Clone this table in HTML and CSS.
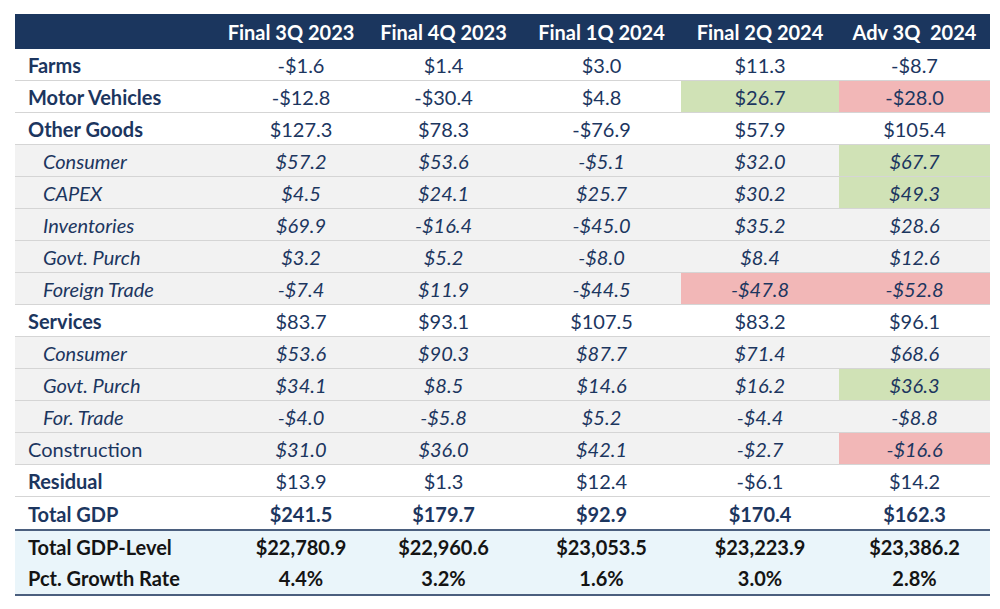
FILE: index.html
```html
<!DOCTYPE html>
<html lang="en">
<head>
<meta charset="utf-8">
<title>GDP Contributions</title>
<link rel="stylesheet" href="styles.css">
</head>
<body>
<div class="table">
  <div class="row head">
    <div class="cell label"></div>
    <div class="cell first">Final 3Q 2023</div>
    <div class="cell">Final 4Q 2023</div>
    <div class="cell">Final 1Q 2024</div>
    <div class="cell">Final 2Q 2024</div>
    <div class="cell">Adv 3Q&nbsp; 2024</div>
  </div>
  <div class="row main">
    <div class="cell label">Farms</div>
    <div class="cell">-$1.6</div><div class="cell">$1.4</div><div class="cell">$3.0</div><div class="cell">$11.3</div><div class="cell">-$8.7</div>
  </div>
  <div class="row main">
    <div class="cell label">Motor Vehicles</div>
    <div class="cell">-$12.8</div><div class="cell">-$30.4</div><div class="cell">$4.8</div><div class="cell good">$26.7</div><div class="cell bad">-$28.0</div>
  </div>
  <div class="row main">
    <div class="cell label">Other Goods</div>
    <div class="cell">$127.3</div><div class="cell">$78.3</div><div class="cell">-$76.9</div><div class="cell">$57.9</div><div class="cell">$105.4</div>
  </div>
  <div class="row sub">
    <div class="cell label">Consumer</div>
    <div class="cell">$57.2</div><div class="cell">$53.6</div><div class="cell">-$5.1</div><div class="cell">$32.0</div><div class="cell good">$67.7</div>
  </div>
  <div class="row sub">
    <div class="cell label">CAPEX</div>
    <div class="cell">$4.5</div><div class="cell">$24.1</div><div class="cell">$25.7</div><div class="cell">$30.2</div><div class="cell good">$49.3</div>
  </div>
  <div class="row sub">
    <div class="cell label">Inventories</div>
    <div class="cell">$69.9</div><div class="cell">-$16.4</div><div class="cell">-$45.0</div><div class="cell">$35.2</div><div class="cell">$28.6</div>
  </div>
  <div class="row sub">
    <div class="cell label">Govt. Purch</div>
    <div class="cell">$3.2</div><div class="cell">$5.2</div><div class="cell">-$8.0</div><div class="cell">$8.4</div><div class="cell">$12.6</div>
  </div>
  <div class="row sub">
    <div class="cell label">Foreign Trade</div>
    <div class="cell">-$7.4</div><div class="cell">$11.9</div><div class="cell">-$44.5</div><div class="cell bad">-$47.8</div><div class="cell bad">-$52.8</div>
  </div>
  <div class="row main">
    <div class="cell label">Services</div>
    <div class="cell">$83.7</div><div class="cell">$93.1</div><div class="cell">$107.5</div><div class="cell">$83.2</div><div class="cell">$96.1</div>
  </div>
  <div class="row sub">
    <div class="cell label">Consumer</div>
    <div class="cell">$53.6</div><div class="cell">$90.3</div><div class="cell">$87.7</div><div class="cell">$71.4</div><div class="cell">$68.6</div>
  </div>
  <div class="row sub">
    <div class="cell label">Govt. Purch</div>
    <div class="cell">$34.1</div><div class="cell">$8.5</div><div class="cell">$14.6</div><div class="cell">$16.2</div><div class="cell good">$36.3</div>
  </div>
  <div class="row sub">
    <div class="cell label">For. Trade</div>
    <div class="cell">-$4.0</div><div class="cell">-$5.8</div><div class="cell">$5.2</div><div class="cell">-$4.4</div><div class="cell">-$8.8</div>
  </div>
  <div class="row sub plain">
    <div class="cell label">Construction</div>
    <div class="cell">$31.0</div><div class="cell">$36.0</div><div class="cell">$42.1</div><div class="cell">-$2.7</div><div class="cell bad">-$16.6</div>
  </div>
  <div class="row main">
    <div class="cell label">Residual</div>
    <div class="cell">$13.9</div><div class="cell">$1.3</div><div class="cell">$12.4</div><div class="cell">-$6.1</div><div class="cell">$14.2</div>
  </div>
  <div class="row main total">
    <div class="cell label">Total GDP</div>
    <div class="cell">$241.5</div><div class="cell">$179.7</div><div class="cell">$92.9</div><div class="cell">$170.4</div><div class="cell">$162.3</div>
  </div>
  <div class="summary">
    <div class="row sum">
      <div class="cell label">Total GDP-Level</div>
      <div class="cell">$22,780.9</div><div class="cell">$22,960.6</div><div class="cell">$23,053.5</div><div class="cell">$23,223.9</div><div class="cell">$23,386.2</div>
    </div>
    <div class="row sum">
      <div class="cell label">Pct. Growth Rate</div>
      <div class="cell">4.4%</div><div class="cell">3.2%</div><div class="cell">1.6%</div><div class="cell">3.0%</div><div class="cell">2.8%</div>
    </div>
  </div>
</div>
</body>
</html>
```
FILE: styles.css
```css
html, body {
  margin: 0;
  padding: 0;
  background: #ffffff;
}

body {
  font-family: Lato, "Open Sans", sans-serif;
  font-size: 20px;
  color: #1c365f;
}

.table {
  width: 975px;
  margin: 14px 0 0 15px;
}

.row {
  display: grid;
  grid-template-columns: 222px 128px 157px 159px 158px 151px;
  height: 32px;
  box-sizing: border-box;
  border-bottom: 1px solid #d5d5d5;
}

.cell {
  display: flex;
  align-items: center;
  justify-content: center;
  white-space: nowrap;
  padding-top: 1px;
}

.label {
  justify-content: flex-start;
  padding-left: 13px;
}

.head {
  height: 35px;
  background: #1b365e;
  color: #ffffff;
  font-weight: 700;
  border-bottom: none;
}

.head .first {
  padding-right: 20px;
}

.main .label {
  font-weight: 700;
}

.sub {
  background: #f2f2f2;
  font-style: italic;
}

.sub .label {
  padding-left: 28px;
}

.sub.plain .label {
  font-style: normal;
  padding-left: 13px;
}

.total {
  height: 34px;
  font-weight: 700;
  border-bottom: 2px solid #4b5f7e;
}

.good {
  background: #d0e2b6;
}

.bad {
  background: #f2b7b7;
}

.summary {
  background: #eaf5fa;
  border-bottom: 2px solid #4b5f7e;
  padding-bottom: 1px;
}

.sum {
  height: 31px;
  border-bottom: none;
  color: #141414;
  font-weight: 700;
}
```
